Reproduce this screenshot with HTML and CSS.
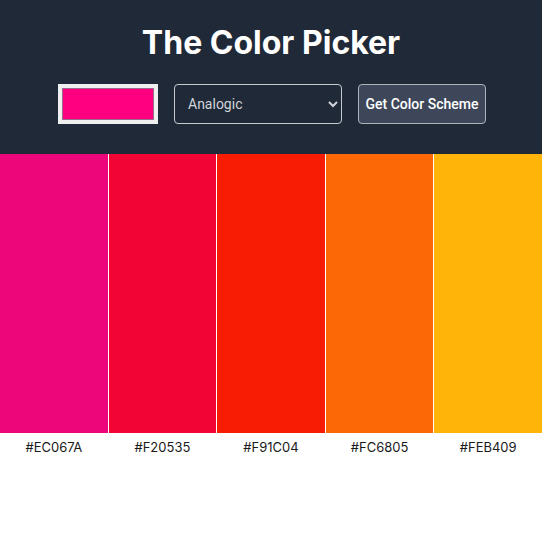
FILE: index.html
```html
<!DOCTYPE html>
<html>
<head>
<meta charset="utf-8">
<link rel="stylesheet" href="styles.css">
</head>
<body>
<header class="header">
  <h1 class="title">The Color Picker</h1>
  <div class="controls">
    <input class="color-input" type="color" value="#ff0080">
    <select class="mode-select">
      <option>Analogic</option>
    </select>
    <button class="scheme-btn">Get Color Scheme</button>
  </div>
</header>
<main class="palette">
  <div class="col"><div class="swatch" style="background:#EC067A"></div><p class="hex">#EC067A</p></div>
  <div class="col"><div class="swatch" style="background:#F20535"></div><p class="hex">#F20535</p></div>
  <div class="col"><div class="swatch" style="background:#F91C04"></div><p class="hex">#F91C04</p></div>
  <div class="col"><div class="swatch" style="background:#FC6805"></div><p class="hex">#FC6805</p></div>
  <div class="col"><div class="swatch" style="background:#FEB409"></div><p class="hex">#FEB409</p></div>
</main>
</body>
</html>
```
FILE: styles.css
```css
* { box-sizing: border-box; }
body {
  margin: 0;
  font-family: Inter, "Noto Sans", sans-serif;
  background: #fff;
}
.header {
  background: #1f2937;
  height: 154px;
  padding-top: 24px;
}
.title {
  margin: 0;
  text-align: center;
  color: #fff;
  font-size: 32px;
  font-weight: 700;
  line-height: 38px;
}
.controls {
  margin-top: 22px;
  display: flex;
  justify-content: center;
  gap: 16px;
  padding-left: 2px;
}
.color-input {
  width: 100px;
  height: 40px;
  padding: 0;
  border: none;
  background: #efefef;
  cursor: pointer;
}
.color-input::-webkit-color-swatch-wrapper {
  padding: 4px 4px;
}
.color-input::-webkit-color-swatch {
  border: 1px solid #9a6b8b;
}
.mode-select {
  width: 168px;
  height: 40px;
  background: #1f2937;
  color: #d1d5db;
  border: 1px solid #c7cbd1;
  border-radius: 4px;
  font-family: Roboto, "Liberation Sans", Arial, sans-serif;
  font-size: 14px;
  padding: 0 9px;
}
.scheme-btn {
  width: 128px;
  height: 40px;
  background: #3d4759;
  color: #fff;
  border: 1px solid #aeb4bd;
  border-radius: 4px;
  font-family: Roboto, "Liberation Sans", Arial, sans-serif;
  font-weight: 500;
  font-size: 14px;
  padding: 0;
}
.palette {
  display: grid;
  grid-template-columns: repeat(5, 1fr);
  column-gap: 1px;
  background: #fff;
}
.col { display: flex; flex-direction: column; }
.swatch { height: 279px; }
.hex {
  margin: 0;
  text-align: center;
  font-size: 13px;
  line-height: 28px;
  color: #1a1a1a;
}
```
